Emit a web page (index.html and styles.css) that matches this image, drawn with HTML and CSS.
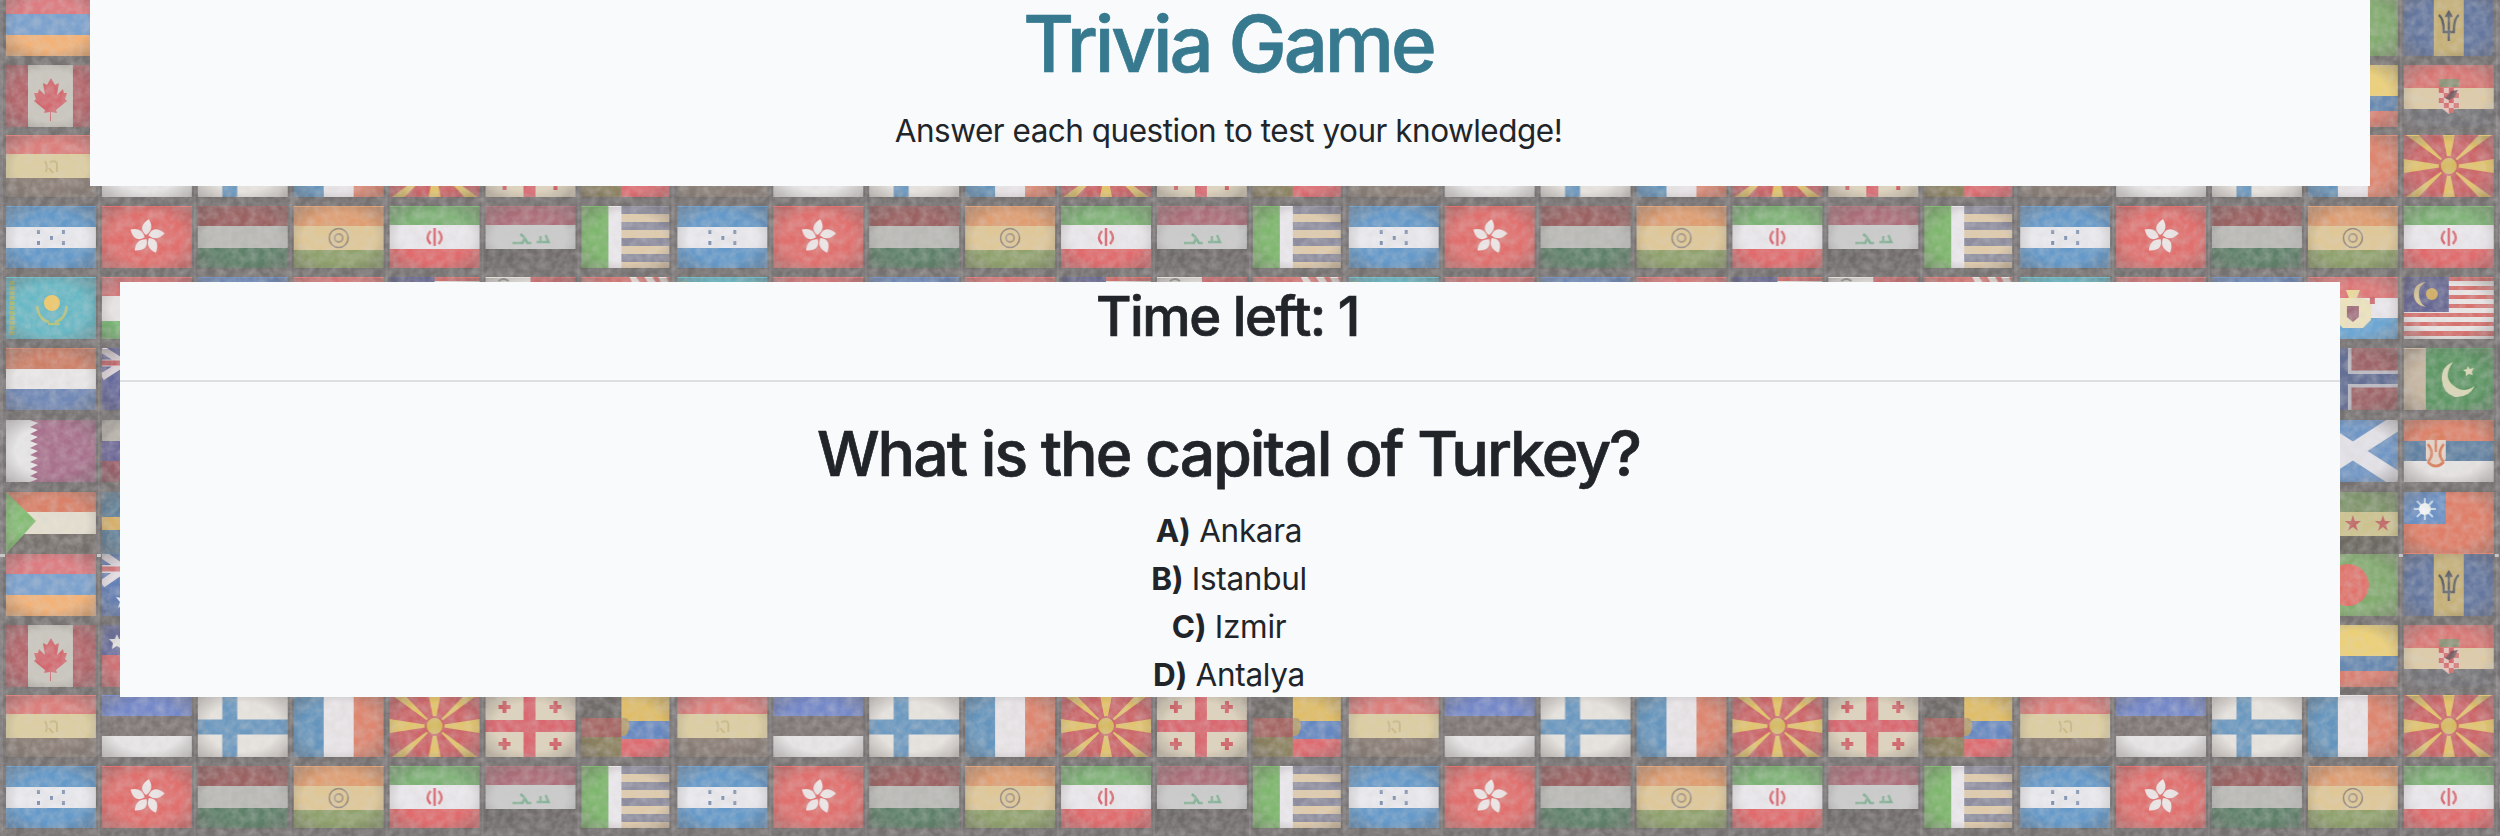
FILE: index.html
```html
<!DOCTYPE html>
<html lang="en">
<head>
<meta charset="utf-8">
<title>Trivia Game</title>
<link rel="stylesheet" href="styles.css">
</head>
<body>
<svg class="backdrop" width="2500" height="836" aria-hidden="true">
  <defs>
    <radialGradient id="shade" cx=".5" cy=".5" r=".72">
      <stop offset=".55" stop-color="#6b6565" stop-opacity="0"/>
      <stop offset="1" stop-color="#6b6565" stop-opacity=".5"/>
    </radialGradient>
    <clipPath id="flagBox"><rect width="90" height="62"/></clipPath>
    <filter id="grain" x="0" y="0" width="100%" height="100%">
      <feTurbulence type="fractalNoise" baseFrequency=".12" numOctaves="3" seed="4" stitchTiles="stitch"/>
      <feColorMatrix values="0 0 0 0 .66  0 0 0 0 .64  0 0 0 0 .63  .6 0 0 0 -.18"/>
    </filter>
    <pattern id="cell" width="96" height="71" patternUnits="userSpaceOnUse">
      <rect x="6" width="90" height="62" fill="url(#shade)"/>
    </pattern>
    <pattern id="flags" width="672" height="560" patternUnits="userSpaceOnUse" patternTransform="translate(0 -6) scale(.9991 1)">
      <rect width="672" height="560" fill="#757171"/>
      <path d="M0 0h3v560H0zM98 0h2v560h-2zM194 0h2v560h-2zM290 0h2v560h-2zM386 0h2v560h-2zM482 0h2v560h-2zM578 0h2v560h-2z" fill="#807c7d"/>
      <!-- row 1 -->
      <g transform="translate(6 0)"><path fill="#dc7b80" d="M0 0h90v21H0z"/><path fill="#7ba1cd" d="M0 20h90v21H0z"/><path fill="#f3b277" d="M0 41h90v21H0z"/></g>
      <g transform="translate(102 0)"><path fill="#6480b6" d="M0 0h90v62H0z"/><path d="M0 0l44 30M44 0L0 30M0 15h44M22 0v30" stroke="#e6dfe6" stroke-width="8" clip-path="url(#flagBox)"/><path d="M0 15h44M22 0v30" stroke="#d8797c" stroke-width="5"/><path fill="#e8e8ee" d="M22 38l2 6 6-1-4 5 3 6-7-3-6 3 2-6-4-5 6 1z"/></g>
      <g transform="translate(294 0)"><path fill="#83ab70" d="M0 0h90v62H0z"/><circle cx="40" cy="31" r="21" fill="#e0746c"/></g>
      <g transform="translate(390 0)"><path fill="#64779f" d="M0 0h90v62H0z"/><path fill="#c5b078" d="M30 0h30v62H30z"/><path d="M45 18v29M35 21q5 3 5 17h10q0-14 5-17M42 23l3-5 3 5" fill="none" stroke="#595d65" stroke-width="2.4"/></g>
      <!-- row 2 -->
      <g transform="translate(6 71)"><path fill="#b3666b" d="M0 0h90v62H0z"/><path fill="#c9c6be" d="M22 0h45v62H22z"/><path fill="#d2696f" d="M45 13l4 7 4-2-2 12 6-6 1 4h3l-2 6 2 2-11 9 1 3-6-1v9h-1v-9l-6 1 1-3-11-9 2-2-2-6h4l1-4 6 6-2-12 4 2z"/></g>
      <g transform="translate(102 71)"><path fill="#cf7074" d="M0 0h90v62H0z"/><path fill="#deddde" d="M30 0h60v30H30z"/><path fill="#6a6f9f" d="M0 0h30v30H0z"/><path fill="#e4e1e1" d="M15 9l2 5h6l-4 4 1 6-5-3-5 3 1-6-4-4h6z"/></g>
      <g transform="translate(294 71)"><path fill="#ecd077" d="M0 0h90v31H0z"/><path fill="#6889b0" d="M0 31h90v15H0z"/><path fill="#d97e70" d="M0 46h90v16H0z"/></g>
      <g transform="translate(390 71)"><path fill="#d97774" d="M0 0h90v23H0z"/><path fill="#ddcba8" d="M0 23h90v21H0z"/><path fill="#77777b" d="M0 44h90v18H0z"/><path fill="#8b9277" d="M35 14h20v8H35z"/><path fill="#e4c4bd" d="M35 23h20v18l-10 8-10-8z"/><path fill="#d4696a" d="M35 23h5v5h-5zm10 0h5v5h-5zm-5 5h5v5h-5zm10 0h5v5h-5zm-15 5h5v5h-5zm10 0h5v5h-5zm-5 5h5v5h-5zm10 0h5v5h-5zm-5 5h5v5h-5z"/><path fill="#76595d" d="M41 33l7-7 6-1-3 7-6 3z"/></g>
      <!-- row 3 -->
      <g transform="translate(6 141)"><path fill="#dc7f7c" d="M0 0h90v19H0z"/><path fill="#dccda0" d="M0 19h90v24H0z"/><path fill="#8b7f77" d="M0 43h90v19H0z"/><path d="M39 26q3 5 1 11M44 27q7-2 7 2v8M43 33l4 5" fill="none" stroke="#c8b683" stroke-width="2"/></g>
      <g transform="translate(102 141)"><path fill="#7488c9" d="M0 0h90v21H0z"/><path fill="#7d7573" d="M0 21h90v21H0z"/><path fill="#e8e6e6" d="M0 41h90v21H0z"/></g>
      <g transform="translate(198 141)"><path fill="#e7e3de" d="M0 0h90v62H0z"/><path d="M32 0v62M0 32h90" stroke="#6c99c0" stroke-width="15"/></g>
      <g transform="translate(294 141)"><path fill="#6595bd" d="M0 0h30v62H0z"/><path fill="#e9e5e8" d="M30 0h30v62H30z"/><path fill="#dd8670" d="M60 0h30v62H60z"/></g>
      <g transform="translate(390 141)"><path fill="#cc6669" d="M0 0h90v62H0z"/><path fill="#e2c36a" d="M45 31L0 24v14zM45 31l45-7v14zM45 31L39 0h12zM45 31l-6 31h12zM45 31L2 0h13zM45 31L75 0h13zM45 31L2 62h13zM45 31l30 31h13z"/><circle cx="45" cy="31" r="9" fill="#d6ba60" stroke="#cc6669" stroke-width="2"/></g>
      <g transform="translate(486 141)"><path fill="#ddd2bb" d="M0 0h90v62H0z"/><path d="M44 0v62M0 31h90" stroke="#d96870" stroke-width="12"/><path d="M19 6v12M13 12h12M70 6v12M64 12h12M19 43v12M13 49h12M70 43v12M64 49h12" stroke="#d16369" stroke-width="4"/></g>
      <g transform="translate(582 141)"><path fill="#706c6a" d="M0 0h40v23H0z"/><path fill="#a46562" d="M0 23h40v19H0z"/><path fill="#8b815f" d="M0 42h40v20H0z"/><path fill="#dfbd69" d="M40 0h48v26H40z"/><path fill="#6688c1" d="M40 26h48v18H40z"/><path fill="#dd6b70" d="M40 44h48v18H40z"/><path fill="#b39e70" d="M40 23q8-2 8 8t-8 10z"/></g>
      <!-- row 4 -->
      <g transform="translate(6 212)"><path fill="#6499c9" d="M0 0h90v62H0z"/><path fill="#e9e9ee" d="M0 21h90v21H0z"/><path fill="#7f92b2" d="M31 24h3v4h-3zm25 0h3v4h-3zM44 30h3v4h-3zM31 35h3v4h-3zm25 0h3v4h-3z"/></g>
      <g transform="translate(102 212)"><path fill="#e0706e" d="M0 0h90v62H0z"/><g fill="#ede6e7"><path id="petal" d="M44 29q-9-8 3-16 6 10-3 16z"/><use href="#petal" transform="rotate(72 45 31)"/><use href="#petal" transform="rotate(144 45 31)"/><use href="#petal" transform="rotate(216 45 31)"/><use href="#petal" transform="rotate(288 45 31)"/></g></g>
      <g transform="translate(198 212)"><path fill="#9b6262" d="M0 0h90v21H0z"/><path fill="#b9b9b6" d="M0 20h90v22H0z"/><path fill="#5e8069" d="M0 42h90v20H0z"/></g>
      <g transform="translate(294 212)"><path fill="#df9d70" d="M0 0h90v20H0z"/><path fill="#dfc797" d="M0 20h90v24H0z"/><path fill="#8fa16c" d="M0 44h90v18H0z"/><circle cx="45" cy="32" r="9.5" fill="none" stroke="#91877f" stroke-width="1.5"/><circle cx="45" cy="32" r="4" fill="none" stroke="#a79a87" stroke-width="2"/></g>
      <g transform="translate(390 212)"><path fill="#7db275" d="M0 0h90v20H0z"/><path fill="#ebe8ed" d="M0 19h90v25H0z"/><path fill="#e06b6d" d="M0 43h90v19H0z"/><path d="M45 22v18M41 25q-6 7 0 13M49 25q6 7 0 13" fill="none" stroke="#d96b72" stroke-width="2.5"/></g>
      <g transform="translate(486 212)"><path fill="#ac6f79" d="M0 0h90v19H0z"/><path fill="#cacaca" d="M0 19h90v24H0z"/><path fill="#6f6b6b" d="M0 43h90v19H0z"/><path d="M27 37h10l2-5 3 5h4M35 28l3 3M51 36h12l-3-7M55 30v6" fill="none" stroke="#83b197" stroke-width="2.5"/></g>
      <g transform="translate(582 212)"><path fill="#7db66c" d="M0 0h27v62H0z"/><path fill="#ebe8ed" d="M27 0h13v62H27z"/><path fill="#dfcbac" d="M40 0h48v62H40z"/><path fill="#8d8d9f" d="M40 0h48v8H40zm0 16h48v8H40zm0 16h48v8H40zm0 16h48v8H40z"/></g>
      <!-- row 5 -->
      <g transform="translate(6 283)"><path fill="#68b8c5" d="M0 0h90v62H0z"/><path d="M6 4v54" stroke="#a9bd75" stroke-width="5" stroke-dasharray="4 1"/><circle cx="46" cy="26" r="8" fill="#efc867"/><path d="M31 29q2 14 12 16M61 29q-2 14-12 16M42 47h12" fill="none" stroke="#b8c281" stroke-width="2.5"/></g>
      <g transform="translate(102 283)"><path fill="#d87779" d="M0 0h90v20H0z"/><path fill="#e7e4e3" d="M0 19h90v26H0z"/><path fill="#79ba75" d="M0 44h90v18H0z"/></g>
      <path fill="#6b8abd" d="M198 283h90v62h-90z"/>
      <g transform="translate(294 283)"><path fill="#de7777" d="M0 0h90v21H0z"/><path fill="#ebe8ed" d="M0 21h90v21H0z"/><path fill="#6ca6d3" d="M0 41h90v21H0z"/><path fill="#e9d99c" d="M38 13h14l-3 8h-8z"/><path fill="#ece3bd" d="M35 21h20l9 4-1 18-8 8H35l-8-8-1-18z"/><path fill="#a06d7c" d="M39 29h12v11l-6 5-6-5z"/><path fill="#cb6d72" d="M62 20h5v7h-5z"/></g>
      <g transform="translate(390 283)"><path fill="#e9e5e5" d="M0 0h90v62H0z"/><path fill="#d6716e" d="M0 0h90v4H0zm0 9h90v4H0zm0 9h90v4H0zm0 9h90v4H0zm0 9h90v4H0zm0 9h90v4H0zm0 9h90v5H0z"/><path fill="#666792" d="M0 0h45v35H0z"/><path d="M22 5q-12 1-12 12t12 13q-7-4-7-13t7-12z" fill="#d9c795"/><circle cx="28" cy="17" r="6" fill="#d1af67"/></g>
      <g transform="translate(486 283)"><path fill="#e3e0db" d="M0 0h45v62H0z"/><path fill="#cb6c6e" d="M45 0h45v62H45z"/><path d="M13 4q5-4 10 0" stroke="#91918b" stroke-width="2" fill="none"/></g>
      <g transform="translate(582 283)"><path fill="#da7572" d="M0 0h88v62H0z"/><path fill="#ece4df" d="M48 0h7l5 8h-8zM63 0h8l5 8h-8zM77 0h8l3 8h-7z"/></g>
      <!-- row 6 -->
      <g transform="translate(6 354)"><path fill="#cd8068" d="M0 0h90v21H0z"/><path fill="#e9e7e7" d="M0 21h90v21H0z"/><path fill="#7189b6" d="M0 41h90v21H0z"/></g>
      <g transform="translate(102 354)"><path fill="#65689b" d="M0 0h90v62H0z"/><path d="M0 1l44 28M44 1L0 29M0 15h44M22 0v30" stroke="#dcd3d8" stroke-width="7" clip-path="url(#flagBox)"/><path d="M0 15h44M22 0v30" stroke="#c56669" stroke-width="5"/></g>
      <g transform="translate(294 354)"><path fill="#9d6366" d="M0 0h90v62H0z"/><path d="M35 0v62M0 31h90" stroke="#b9b8c1" stroke-width="17"/><path d="M35 0v62M0 31h90" stroke="#646f94" stroke-width="10"/></g>
      <g transform="translate(390 354)"><path fill="#5d9664" d="M0 0h90v62H0z"/><path fill="#c6b6a1" d="M0 0h22v62H0z"/><path fill="#d9d6b7" d="M49 14q-12 5-11 18t13 17q14 1 20-11-10 7-18 2t-9-11 5-15zM64 18l2 3 4-1-2 4 1 3-4-1-3 2v-4l-3-2 4-1z"/></g>
      <!-- row 7 -->
      <g transform="translate(6 426)"><path fill="#a8718d" d="M0 0h90v62H0z"/><path fill="#e8e7e8" d="M0 0h24l8 3-8 4 8 3-8 4 8 3-8 4 8 3-8 4 8 3-8 4 8 3-8 4 8 3-8 4 8 3-8 4 8 3-8 3H0z"/></g>
      <g transform="translate(102 426)"><path fill="#b9b5ab" d="M0 0h90v21H0z"/><path fill="#6c6797" d="M0 21h90v21H0z"/><path fill="#9b606b" d="M0 41h90v21H0z"/></g>
      <g transform="translate(294 426)"><path fill="#7096c5" d="M0 0h90v62H0z"/><path d="M0 2l90 58M0 60L90 2" stroke="#e3e2e8" stroke-width="16" clip-path="url(#flagBox)"/></g>
      <g transform="translate(390 426)"><path fill="#dd836b" d="M0 0h90v21H0z"/><path fill="#6282a2" d="M0 21h90v21H0z"/><path fill="#e6e3e3" d="M0 41h90v21H0z"/><path fill="#e5d3c7" d="M22 20h20v18q-2 10-10 10t-10-10z"/><path d="M24 17q8-12 16 0zM24 24q8 10 0 18M40 24q-8 10 0 18M24 42q8 8 16 0M32 20v12" fill="none" stroke="#d8805f" stroke-width="2.5"/></g>
      <!-- row 8 -->
      <g transform="translate(6 498)"><path fill="#d98169" d="M0 0h90v21H0z"/><path fill="#e4dfcf" d="M0 20h90v22H0z"/><path fill="#77726d" d="M0 42h90v20H0z"/><path fill="#83bc73" d="M0 0l30 29L0 62z"/></g>
      <g transform="translate(102 498)"><path fill="#62829a" d="M0 0h90v62H0z"/><path fill="#d6b068" d="M0 25h90v13H0z"/></g>
      <g transform="translate(294 498)"><path fill="#7e946b" d="M0 0h90v20H0z"/><path fill="#ccc28e" d="M0 20h90v24H0z"/><path fill="#6c6a62" d="M0 44h90v18H0z"/><path id="star" fill="#c06462" d="M45 23l2 6h6l-5 4 2 6-5-4-5 4 2-6-5-4h6z"/><use href="#star" x="30"/></g>
      <g transform="translate(390 498)"><path fill="#df7f69" d="M0 0h90v62H0z"/><path fill="#698fc4" d="M0 0h42v32H0z"/><path d="M21 6v22M10 17h22M13 9l16 16M29 9L13 25" stroke="#c7dae8" stroke-width="2"/><circle cx="21" cy="17" r="6" fill="#f2f4f5"/></g>
      <rect width="672" height="560" fill="url(#cell)"/>
      <rect width="672" height="560" filter="url(#grain)"/>
      <path fill="#c9c6c7" d="M0 0h5v3H0zM97 0h4v3h-4zM193 0h4v3h-4zM289 0h4v3h-4zM385 0h4v3h-4zM481 0h4v3h-4zM577 0h4v3h-4z"/>
    </pattern>
  </defs>
  <rect width="2500" height="836" fill="url(#flags)"/>
</svg>
<main class="page">
  <header class="banner">
    <h1 class="title">Trivia Game</h1>
    <p class="lead">Answer each question to test your knowledge!</p>
  </header>
  <section class="quiz">
    <h3 class="timer">Time left: 1</h3>
    <hr class="rule">
    <h2 class="question">What is the capital of Turkey?</h2>
    <div class="answers">
      <div class="answer"><b>A)</b> Ankara</div>
      <div class="answer"><b>B)</b> Istanbul</div>
      <div class="answer"><b>C)</b> Izmir</div>
      <div class="answer"><b>D)</b> Antalya</div>
    </div>
  </section>
</main>
</body>
</html>
```
FILE: styles.css
```css
* { box-sizing: border-box; }
body {
  margin: 0;
  height: 836px;
  overflow: hidden;
  color: #212529;
  background: #777373;
  font-family: Inter, "Liberation Sans", sans-serif;
  font-size: 31.5px;
  line-height: 48px;
  text-align: center;
}
h1, h2, h3, p { margin: 0; font-weight: 500; padding-right: 3px; }
h1, h2, h3 { -webkit-text-stroke: 0.7px currentColor; }
.backdrop { position: absolute; inset: 0; display: block; }
.page {
  position: relative;
  width: 2280px;
  margin-left: 90px;
}
.banner { height: 186px; background: #f8fafc; }
.title { color: #37798e; font-size: 78px; line-height: 88px; letter-spacing: -3.1px; }
.lead { font-weight: 400; margin-top: 19px; letter-spacing: -0.5px; }
.quiz {
  height: 415px;
  margin: 96px 30px 0;
  background: #f8fafc;
  overflow: hidden;
}
.timer { font-size: 54.5px; line-height: 68px; letter-spacing: -1.5px; padding-right: 5px; }
.rule { border: 0; height: 2px; margin: 30px 0 32px; background: #dddfe1; }
.question { font-size: 62.5px; line-height: 78px; letter-spacing: -2px; }
.answers { margin-top: 15px; padding-right: 2px; }
.answer { letter-spacing: -0.3px; }
.answer b { font-weight: 700; }
```
